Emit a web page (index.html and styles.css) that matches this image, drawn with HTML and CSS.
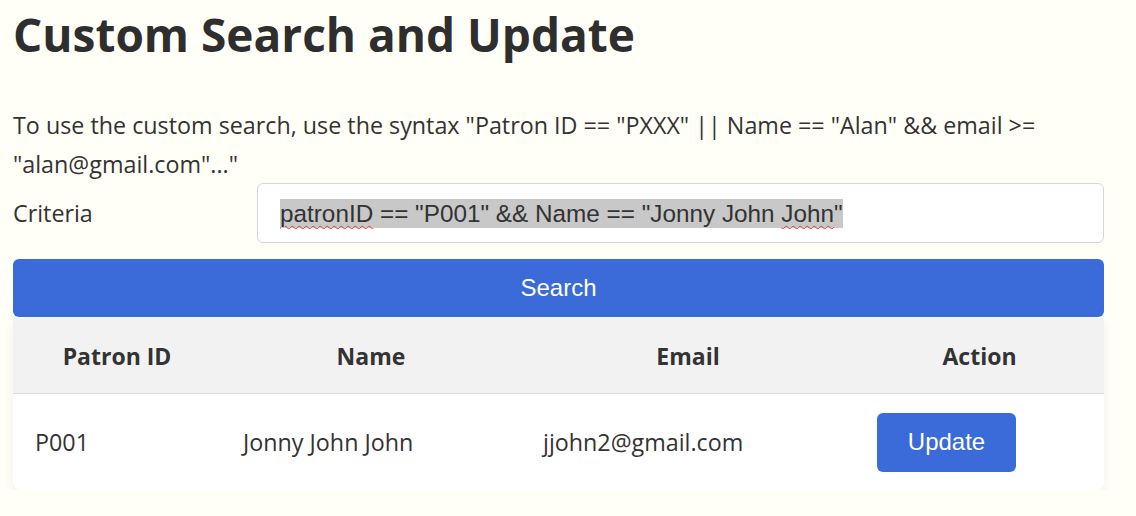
FILE: index.html
```html
<!DOCTYPE html>
<html lang="en">
<head>
<meta charset="utf-8">
<title>Custom Search and Update</title>
<link rel="stylesheet" href="styles.css">
</head>
<body>
<main class="page">
  <h1 class="title">Custom Search and Update</h1>
  <p class="hint">To use the custom search, use the syntax "Patron ID == "PXXX" || Name == "Alan" &amp;&amp; email &gt;= "alan@gmail.com"..."</p>
  <div class="field">
    <label class="field-label">Criteria</label>
    <div class="field-input"><span class="sel"><span class="typo">patronID</span> == "P001" &amp;&amp; Name == "Jonny John <span class="typo">John</span>"</span></div>
  </div>
  <button class="btn btn-search">Search</button>
  <div class="table-card">
    <table class="results">
      <colgroup>
        <col class="c1"><col class="c2"><col class="c3"><col class="c4">
      </colgroup>
      <thead>
        <tr><th>Patron ID</th><th>Name</th><th>Email</th><th>Action</th></tr>
      </thead>
      <tbody>
        <tr>
          <td>P001</td>
          <td>Jonny John John</td>
          <td>jjohn2@gmail.com</td>
          <td><button class="btn btn-update">Update</button></td>
        </tr>
      </tbody>
    </table>
  </div>
</main>
</body>
</html>
```
FILE: styles.css
```css
html, body {
  margin: 0;
  padding: 0;
  background: #fffff7;
}
body {
  font-family: "Open Sans", "Noto Sans", sans-serif;
  color: #333;
}
.page {
  width: 1091px;
  padding: 0 0 0 13px;
}
.title {
  font-size: 46px;
  font-weight: 700;
  margin: 0;
  padding-top: 2px;
  line-height: 64px;
  color: #2e2e2e;
}
.hint {
  font-size: 23.3px;
  line-height: 39px;
  margin: 40px 0 0 0;
}
.field {
  display: flex;
  align-items: center;
  margin-top: -1px;
}
.field-label {
  width: 244px;
  font-size: 23.3px;
}
.field-input {
  flex: 1;
  height: 58px;
  border: 1px solid #d6d6d6;
  border-radius: 6px;
  background: #fff;
  display: flex;
  align-items: center;
  padding-left: 22px;
  font-family: "Liberation Sans", Arial, sans-serif;
  font-size: 24.3px;
  color: #333;
}
.sel {
  background: #c8c8c8;
  line-height: 29px;
  white-space: pre;
}
.typo {
  text-decoration: underline wavy #e53935;
  text-decoration-thickness: 1px;
  text-underline-offset: 3px;
}
.btn {
  background: #3a6bd9;
  color: #fff;
  border: none;
  border-radius: 6px;
  font-family: "Liberation Sans", Arial, sans-serif;
  font-size: 24px;
  cursor: pointer;
}
.btn-search {
  display: block;
  width: 100%;
  height: 58px;
  margin-top: 16px;
}
.table-card {
  margin-top: 1px;
  background: #fff;
  border-radius: 0 0 8px 8px;
  box-shadow: 0 4px 12px rgba(0, 0, 0, 0.06);
  overflow: hidden;
}
.results {
  width: 100%;
  border-collapse: collapse;
  table-layout: fixed;
  font-size: 23.3px;
}
.c1 { width: 208px; }
.c2 { width: 300px; }
.c3 { width: 334px; }
.c4 { width: 249px; }
.results th {
  background: #f2f2f2;
  height: 75px;
  padding: 0 22px;
  font-weight: 700;
  font-size: 23px;
  text-align: center;
  border-bottom: 1px solid #e0e0e0;
}
.results td {
  height: 96px;
  padding: 0 22px;
  text-align: left;
}
.btn-update {
  width: 139px;
  height: 59px;
}
```
